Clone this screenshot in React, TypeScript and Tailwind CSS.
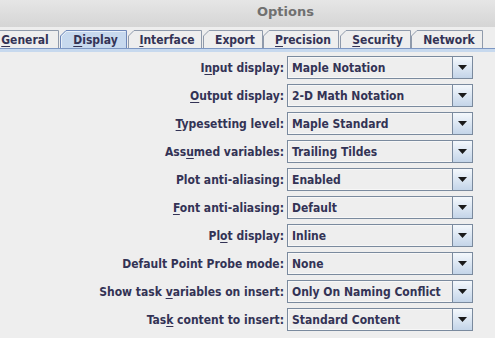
import React from "react";

type Tab = { label: React.ReactNode; w: number; ml: number; selected?: boolean };

function U({ children }: { children: React.ReactNode }) {
  return <span className="underline underline-offset-[2px] decoration-1">{children}</span>;
}

function TabItem({ t }: { t: Tab }) {
  const w = t.w;
  const h = t.selected ? 19 : 18;
  const d = `M0.5,${h} L0.5,6 L6,0.5 L${w - 0.5},0.5 L${w - 0.5},${h}`;
  return (
    <div
      className="relative shrink-0 h-[18px] flex items-center justify-center pl-[4px] pt-[2px]"
      style={{ width: w, marginLeft: t.ml }}
    >
      <svg className="absolute left-0 top-0" width={w} height={h} viewBox={`0 0 ${w} ${h}`}>
        <path d={d} fill={t.selected ? "#c7d9ee" : "#eeeeee"} stroke={t.selected ? "#6f88b8" : "#8f9aab"} strokeWidth="1" />
        {t.selected ? (
          <path d={`M1.5,${h} L1.5,6.5 L6.5,1.5 L${w - 1.5},1.5`} fill="none" stroke="#e8f0f9" strokeWidth="1" />
        ) : null}
      </svg>
      <span className="relative text-[#333355] leading-none">{t.label}</span>
    </div>
  );
}

function Combo({ value }: { value: string }) {
  return (
    <div className="flex h-[23px] w-[186px] border border-[#7a8a9e] bg-[#eeeeee]">
      <div className="flex-1 flex items-center pl-[3px] border border-[#f7f7f7] border-r-0 text-[#333355] whitespace-nowrap overflow-hidden">
        {value}
      </div>
      <div className="w-[20px] border-l border-[#7a8a9e] bg-gradient-to-b from-[#f4f8fc] to-[#c4d5e9] flex items-center justify-center">
        <svg width="9" height="5" viewBox="0 0 9 5">
          <path d="M0,0 L9,0 L4.5,5 Z" fill="#1a1a1a" />
        </svg>
      </div>
    </div>
  );
}

export default function App() {
  const tabs: Tab[] = [
    { label: <><U>G</U>eneral</>, w: 72, ml: -13 },
    { label: <><U>D</U>isplay</>, w: 67, ml: 1, selected: true },
    { label: <><U>I</U>nterface</>, w: 74, ml: 1 },
    { label: <>Export</>, w: 60, ml: 1 },
    { label: <><U>P</U>recision</>, w: 76, ml: 0 },
    { label: <><U>S</U>ecurity</>, w: 71, ml: 1 },
    { label: <>Network</>, w: 72, ml: 0 },
  ];

  const rows: { label: React.ReactNode; value: string }[] = [
    { label: <>I<U>n</U>put display:</>, value: "Maple Notation" },
    { label: <><U>O</U>utput display:</>, value: "2-D Math Notation" },
    { label: <><U>T</U>ypesetting level:</>, value: "Maple Standard" },
    { label: <>Ass<U>u</U>med variables:</>, value: "Trailing Tildes" },
    { label: <>Plot anti-aliasing:</>, value: "Enabled" },
    { label: <><U>F</U>ont anti-aliasing:</>, value: "Default" },
    { label: <>Pl<U>o</U>t display:</>, value: "Inline" },
    { label: <>Default Point Probe mode:</>, value: "None" },
    { label: <>Show task <U>v</U>ariables on insert:</>, value: "Only On Naming Conflict" },
    { label: <>Tas<U>k</U> content to insert:</>, value: "Standard Content" },
  ];

  return (
    <div className="w-[495px] h-[338px] overflow-hidden bg-[#eeeeee] font-['DejaVu_Sans_Condensed','DejaVu_Sans',sans-serif] font-bold text-[12px]">
      <div className="h-[27px] bg-gradient-to-b from-[#e6e6e6] to-[#d5d5d5] flex items-start justify-center pt-[2px] pl-[76px]">
        <span className="font-['DejaVu_Sans',sans-serif] text-[13px] font-bold text-[#707070]">Options</span>
      </div>
      <div className="pt-[3px] flex items-end overflow-hidden">
        {tabs.map((t, i) => (
          <TabItem key={i} t={t} />
        ))}
      </div>
      <div className="h-[1px] bg-[#7d97c3]" />
      <div className="h-[3px] bg-[#c7d9ee]" />
      <div className="pt-[4px] flex flex-col gap-[5px]">
        {rows.map((r, i) => (
          <div key={i} className="flex items-center h-[23px]">
            <div className="w-[286px] text-right pr-[2px] text-[#333355] whitespace-nowrap">{r.label}</div>
            <div className="ml-[1px]">
              <Combo value={r.value} />
            </div>
          </div>
        ))}
      </div>
    </div>
  );
}
